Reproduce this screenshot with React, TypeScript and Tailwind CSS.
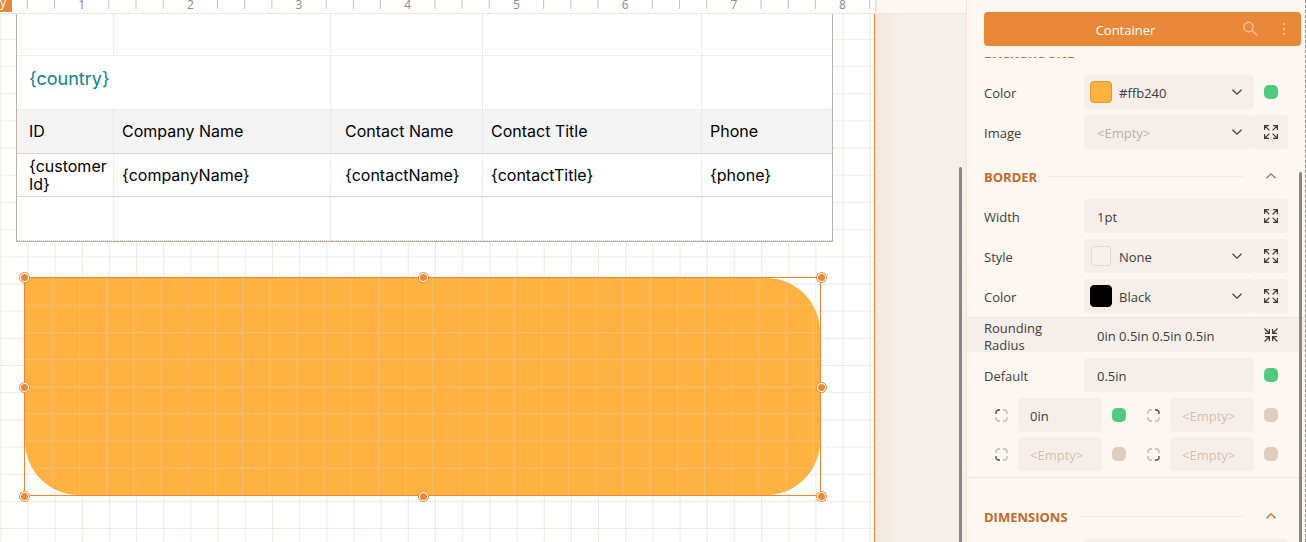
import type { ReactNode } from 'react';

const PITCH = 27.175;

function steps(start: number, count: number) {
  return Array.from({ length: count }, (_, i) => start + PITCH * i);
}

function GridLines({ left, top, color, opacity }: { left: number; top: number; color: string; opacity: number }) {
  return (
    <svg className="pointer-events-none absolute inset-0 h-full w-full" aria-hidden="true" stroke={color} strokeOpacity={opacity}>
      {steps(left, 34).map((x) => (
        <line key={'v' + x} x1={x} x2={x} y1="0" y2="100%" />
      ))}
      {steps(top, 24).map((y) => (
        <line key={'h' + y} x1="0" x2="100%" y1={y} y2={y} />
      ))}
    </svg>
  );
}

function Ruler() {
  return (
    <div className="relative h-[14px] shrink-0 overflow-hidden border-b border-[#f0e4dc] bg-white">
      <svg className="absolute inset-0 h-full w-full" aria-hidden="true">
        {steps(27.3, 32).map((x, i) =>
          i % 4 === 2 ? (
            <text key={i} x={x} y="9" textAnchor="middle" fontSize="12" fontFamily="Open Sans, sans-serif" fill="#8d8a88">
              {(i + 2) / 4}
            </text>
          ) : (
            <line key={i} x1={x} x2={x} y1="0" y2="9" stroke="#c4c2c0" />
          ),
        )}
      </svg>
      <div className="absolute top-0 left-0 h-3 w-3 overflow-hidden bg-[#e98839] text-[12px] leading-[5px] text-white">y</div>
    </div>
  );
}

const dotR = 'border-r border-r-[#e2e2e2] [border-right-style:dotted]';
const dotB = 'border-b border-b-[#dedede] [border-bottom-style:dotted]';
const solidB = 'border-b border-b-[#d6d6d6]';

const fields = [
  { head: 'ID', body: <>{'{customer'}<wbr />{'Id}'}</>, pad: 'pl-3' },
  { head: 'Company Name', body: '{companyName}', pad: 'pl-2' },
  { head: 'Contact Name', body: '{contactName}', pad: 'pl-[14px]' },
  { head: 'Contact Title', body: '{contactTitle}', pad: 'pl-2' },
  { head: 'Phone', body: '{phone}', pad: 'pl-2' },
];

function ReportTable() {
  const edge = (i: number) => (i < 4 ? dotR : '');
  return (
    <table className="relative ml-4 w-[817px] table-fixed border-separate border-spacing-0 border border-t-0 border-[#bdb2aa] bg-white text-left text-[16px] leading-[18px] text-black">
      <colgroup>
        <col className="w-[97px]" />
        <col className="w-[217px]" />
        <col className="w-[152px]" />
        <col className="w-[219px]" />
        <col />
      </colgroup>
      <tbody>
        <tr className="h-[42px]">
          {fields.map((f, i) => <td key={f.head} className={`${edge(i)} ${dotB}`} />)}
        </tr>
        <tr className="h-[54px]">
          <td colSpan={2} className={`${dotR} ${dotB} pb-2 pl-3 text-[18px] text-[#0b8585]`}>{'{country}'}</td>
          <td className={`${dotR} ${dotB}`} />
          <td className={`${dotR} ${dotB}`} />
          <td className={dotB} />
        </tr>
        <tr className="h-[44px] bg-[#f4f4f4]">
          {fields.map((f, i) => (
            <th key={f.head} scope="col" className={`${edge(i)} ${solidB} ${f.pad} pt-0 pr-0 pb-[2px] font-normal`}>{f.head}</th>
          ))}
        </tr>
        <tr className="h-[43px]">
          {fields.map((f, i) => (
            <td key={f.head} className={`${edge(i)} ${solidB} ${f.pad} py-0 pr-0`}>{f.body}</td>
          ))}
        </tr>
        <tr className="h-[44px]">
          {fields.map((f, i) => <td key={f.head} className={`${edge(i)} border-b border-b-[#cfcac6] [border-bottom-style:dotted]`} />)}
        </tr>
      </tbody>
    </table>
  );
}

const handles = [
  'left-0 top-0', 'left-1/2 top-0', 'left-full top-0',
  'left-0 top-1/2', 'left-full top-1/2',
  'left-0 top-full', 'left-1/2 top-full', 'left-full top-full',
];

function SelectedContainer() {
  return (
    <div className="relative mt-[35px] ml-6 h-[219px] w-[797px] border border-[#e98839]">
      <div className="relative h-full overflow-hidden rounded-tr-[54px] rounded-br-[54px] rounded-bl-[54px] bg-[#ffb240]">
        <GridLines left={27.3} top={27.3} color="#e9c79a" opacity={0.6} />
      </div>
      <div className="absolute -top-px -right-px -bottom-px -left-px">
        {handles.map((pos) => (
          <span key={pos} className={`absolute ${pos} -mt-[5px] -ml-[5px] flex size-[11px] items-center justify-center rounded-full border border-[#e98839] bg-white`}>
            <span className="size-[7px] rounded-full bg-[#e98839]" />
          </span>
        ))}
      </div>
    </div>
  );
}

function Chevron({ up = false }: { up?: boolean }) {
  return (
    <svg className="pointer-events-none shrink-0" width="12" height="12" viewBox="0 0 12 12" fill="none" stroke="currentColor" strokeWidth="1.2" aria-hidden="true">
      <path d={up ? 'M1.5 8.2 6 3.8l4.5 4.4' : 'M1.5 3.8 6 8.2l4.5-4.4'} />
    </svg>
  );
}

function Resize({ inward = false }: { inward?: boolean }) {
  return (
    <svg width="16" height="16" viewBox="0 0 16 16" fill="none" stroke="currentColor" strokeWidth="1.2" aria-hidden="true">
      {inward ? (
        <path d="M1.5 1.5 6 6M6.4 2v4.4H2M14.5 1.5 10 6M9.6 2v4.4H14M1.5 14.5 6 10M6.4 14V9.6H2M14.5 14.5 10 10M9.6 14V9.6H14" />
      ) : (
        <path d="M6.4 6.4 2 2M1.6 6V1.6H6M9.6 6.4 14 2M10 1.6h4.4V6M6.4 9.6 2 14M1.6 10v4.4H6M9.6 9.6 14 14M10 14.4h4.4V10" />
      )}
    </svg>
  );
}

function CornerIcon({ corner }: { corner: number }) {
  const arcs = ['M1 5V3.5A2.5 2.5 0 0 1 3.5 1H5', 'M8 1h1.5A2.5 2.5 0 0 1 12 3.5V5', 'M1 8v1.5A2.5 2.5 0 0 0 3.5 12H5', 'M12 8v1.5A2.5 2.5 0 0 1 9.5 12H8'];
  return (
    <svg width="13" height="13" viewBox="0 0 13 13" fill="none" strokeWidth="1.3" aria-hidden="true">
      {arcs.map((d, i) => <path key={i} d={d} stroke={i === corner ? '#4a4542' : '#bdb6b0'} />)}
    </svg>
  );
}

function Dot({ on = false, label }: { on?: boolean; label: string }) {
  return <button aria-label={label} className={`size-[14px] rounded-[5px] ${on ? 'bg-[#4fcb7f]' : 'bg-[#decdbf]'}`} />;
}

function Title({ children }: { children: string }) {
  return (
    <div className="flex h-[50px] items-center pt-1 text-[#c26a2b]">
      <h2 className="pt-[2px] text-[13px] leading-5 font-bold">{children}</h2>
      <div className="ml-[10px] h-px flex-1 bg-[#f7e8dc]" />
      <button aria-label={`Collapse ${children}`} className="ml-[11px] flex w-[34px] justify-center"><Chevron up /></button>
    </div>
  );
}

function Row({ label, id, children, action }: { label: string; id: string; children: ReactNode; action: ReactNode }) {
  return (
    <div className="mb-[6px] flex h-[34px] items-center">
      <label htmlFor={id} className="w-[100px] shrink-0 pt-[2px] leading-[17px]">{label}</label>
      {children}
      {action}
    </div>
  );
}

function ActionButton({ label }: { label: string }) {
  return (
    <button aria-label={label} className="flex h-[34px] w-[34px] shrink-0 items-center justify-center rounded-[4px] bg-[#f6efe9]"><Resize /></button>
  );
}

function Pick({ id, value, swatch, muted = false }: { id: string; value: string; swatch?: string; muted?: boolean }) {
  return (
    <div className="flex h-[34px] min-w-0 flex-1 items-center rounded-[4px] bg-[#f6efe9] pr-[11px]">
      {swatch && (
        <span className="ml-[6px] flex size-[22px] shrink-0 items-center justify-center">
          <span className={`rounded-[4px] border ${swatch}`} />
        </span>
      )}
      <select id={id} defaultValue={value} className={`h-full min-w-0 flex-1 appearance-none bg-transparent pt-[3px] ${swatch ? 'pl-[7px]' : 'pl-[13px]'} ${muted ? 'text-[#b9aea8]' : ''}`}>
        <option>{value}</option>
      </select>
      <Chevron />
    </div>
  );
}

function CornerField({ corner, name, value = '' }: { corner: number; name: string; value?: string }) {
  return (
    <>
      <label htmlFor={name} aria-label={name} className="flex w-[34px] justify-center"><CornerIcon corner={corner} /></label>
      <input id={name} defaultValue={value} placeholder="<Empty>" className="h-[34px] w-0 min-w-0 flex-1 rounded-[4px] bg-[#f6efe9] px-3 pt-[2px] placeholder:text-[#d3bfae]" />
      <span className="flex w-[34px] shrink-0 justify-center"><Dot on={value !== ''} label={`${name} set`} /></span>
    </>
  );
}

function Inspector() {
  return (
    <aside className="relative flex w-[340px] shrink-0 flex-col border-l border-[#f0e4dc] bg-[#fcf7f1] pt-3 text-[13px] text-[#403c39]">
      <div className="mr-[5px] ml-[17px] flex h-[34px] shrink-0 items-center rounded-[4px] bg-[#e98839] text-white">
        <span className="flex-1 pt-[3px] pl-[34px] text-center">Container</span>
        <button aria-label="Search" className="flex w-[34px] justify-center text-[#f5c295]">
          <svg width="16" height="16" viewBox="0 0 16 16" fill="none" stroke="currentColor" strokeWidth="1.4" aria-hidden="true"><circle cx="6.5" cy="6" r="4.7" /><path d="m10 9.5 5 4.8" /></svg>
        </button>
        <button aria-label="More" className="flex w-[34px] justify-center text-[#f5c295]">
          <svg width="4" height="14" viewBox="0 0 4 14" fill="currentColor" aria-hidden="true"><path d="M1 1h2v2H1zM1 6h2v2H1zM1 11h2v2H1z" /></svg>
        </button>
      </div>
      <div className="mt-[11px] min-h-0 flex-1 overflow-hidden">
        <div className="-mt-8 pr-[18px] pl-[17px]">
          <Title>BACKGROUND</Title>
          <Row label="Color" id="bg-color" action={<span className="flex w-[34px] justify-center"><Dot on label="Color set" /></span>}>
            <Pick id="bg-color" value="#ffb240" swatch="size-[22px] bg-[#ffb240] border-[#dc9a3c]" />
          </Row>
          <Row label="Image" id="bg-image" action={<ActionButton label="Expand image" />}>
            <Pick id="bg-image" value="<Empty>" muted />
          </Row>
          <div className="-mt-[6px]"><Title>BORDER</Title></div>
          <Row label="Width" id="bd-width" action={<ActionButton label="Expand width" />}>
            <input id="bd-width" defaultValue="1pt" className="-mr-1 h-[34px] w-0 min-w-0 flex-1 rounded-[4px] bg-[#f6efe9] px-[13px] pt-[2px]" />
          </Row>
          <Row label="Style" id="bd-style" action={<ActionButton label="Expand style" />}>
            <Pick id="bd-style" value="None" swatch="size-5 border-[#e2d8d2] bg-[#f8f1ec]" />
          </Row>
          <Row label="Color" id="bd-color" action={<ActionButton label="Expand color" />}>
            <Pick id="bd-color" value="Black" swatch="size-[22px] bg-black border-black" />
          </Row>
          <div className="-mt-[2px] -mr-[18px] mb-[6px] -ml-[17px] flex h-[35px] items-center border-t border-[#f0e4dc] bg-[#f6efe9] pr-[18px] pl-[17px]">
            <label htmlFor="radius" className="w-[100px] shrink-0 pt-1 pr-6 leading-[17px]">Rounding Radius</label>
            <input id="radius" defaultValue="0in 0.5in 0.5in 0.5in" className="h-[34px] w-0 min-w-0 flex-1 bg-transparent px-[13px] pt-[2px]" />
            <button aria-label="Collapse radius" className="flex w-[34px] justify-center"><Resize inward /></button>
          </div>
          <Row label="Default" id="radius-default" action={<span className="flex w-[34px] justify-center"><Dot on label="Default set" /></span>}>
            <input id="radius-default" defaultValue="0.5in" className="h-[34px] w-0 min-w-0 flex-1 rounded-[4px] bg-[#f6efe9] px-[13px] pt-[2px]" />
          </Row>
          <div className="flex items-center">
            <CornerField corner={0} name="Top left" value="0in" />
            <CornerField corner={1} name="Top right" />
          </div>
          <div className="mt-[5px] flex items-center">
            <CornerField corner={2} name="Bottom left" />
            <CornerField corner={3} name="Bottom right" />
          </div>
          <div className="mt-[6px] -mr-[18px] mb-[11px] -ml-[17px] h-px bg-[#f0e4dc]" />
          <Title>DIMENSIONS</Title>
          <Row label="Left" id="left" action={<ActionButton label="Expand left" />}>
            <input id="left" defaultValue="0in" className="-mr-1 h-[34px] w-0 min-w-0 flex-1 rounded-[4px] bg-[#f6efe9] px-[13px]" />
          </Row>
        </div>
      </div>
      <div className="absolute top-[172px] right-1 bottom-0 w-[3px] rounded-t bg-[#878683]" />
      <div className="absolute inset-y-0 right-0 border-r border-dashed border-[#8f8d8b]" />
    </aside>
  );
}

export default function App() {
  return (
    <div className="flex h-screen overflow-hidden bg-[#fcf7f1] font-['Open_Sans',sans-serif]">
      <main className="relative flex min-w-0 flex-1">
        <section className="flex w-[875px] shrink-0 flex-col">
          <Ruler />
          <div className="relative flex-1 overflow-hidden border-r border-[#e98839] bg-white font-['Inter',sans-serif]">
            <GridLines left={0.7} top={25.4} color="#efe5e0" opacity={0.9} />
            <ReportTable />
            <SelectedContainer />
          </div>
        </section>
        <div className="flex min-w-0 flex-1 flex-col">
          <div className="h-[14px] shrink-0 border-b border-l-2 border-[#f0e4dc]" />
          <div className="flex-1 bg-gradient-to-r from-[#f2e8de] to-[#f6eee9] to-[24px]" />
        </div>
        <div className="absolute top-[167px] right-1 bottom-0 w-[3px] rounded-t bg-[#878683]" />
      </main>
      <Inspector />
    </div>
  );
}
